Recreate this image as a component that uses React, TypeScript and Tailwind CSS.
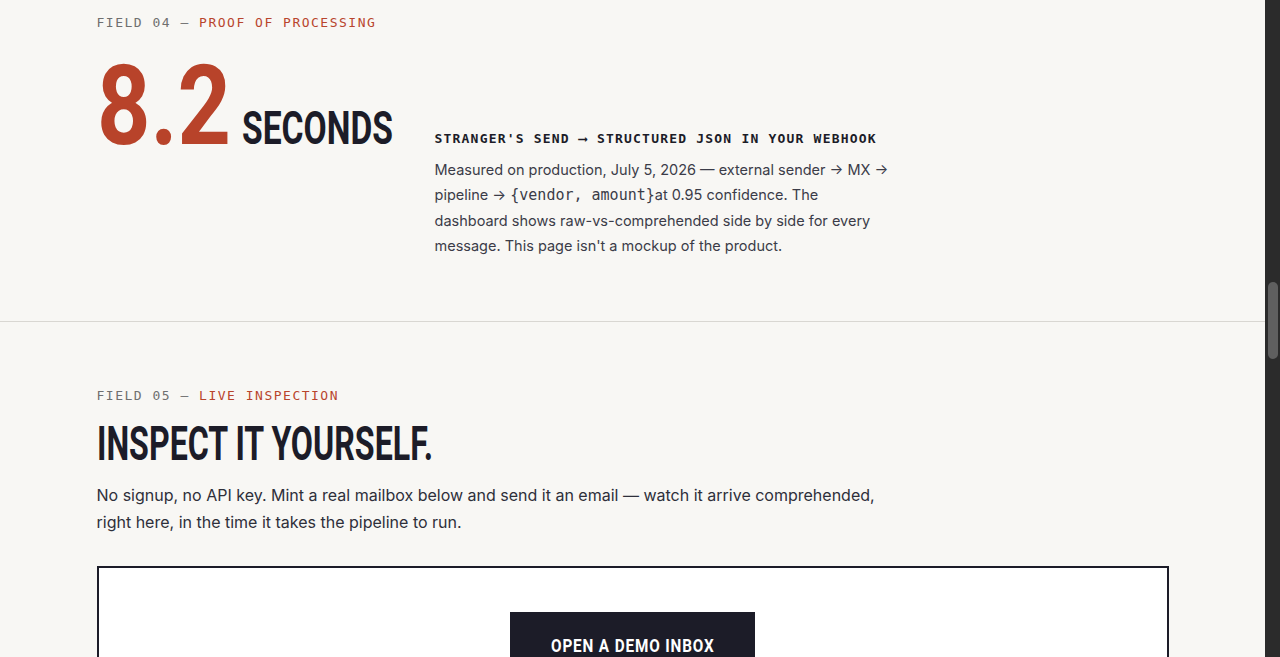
const DISPLAY = "font-['Roboto','Liberation_Sans',sans-serif] font-bold";
const MONO = "font-['DejaVu_Sans_Mono','Liberation_Mono',monospace]";
const BODY = "font-['Inter','Liberation_Sans',sans-serif]";

// No condensed face is installed, so the display type is squeezed horizontally.
// The outer box keeps the width the condensed text would take in the flow.
function Squeeze({ box, scale, children }: { box: string; scale: string; children: string }) {
  return (
    <span className={`inline-block whitespace-nowrap ${box}`}>
      <span className={`inline-block origin-left ${scale}`}>{children}</span>
    </span>
  );
}

function FieldLabel({ num, name }: { num: string; name: string }) {
  return (
    <p className={`${MONO} text-[13px] leading-5 tracking-[1.5px] text-[#6f6f6f]`}>
      FIELD {num} — <span className="text-[#b8452d]">{name}</span>
    </p>
  );
}

function ProofSection() {
  return (
    <section className="border-b border-[#d9d7d2]">
      <div className="mx-auto max-w-[1072px] pt-[13px] pb-[63px]">
        <FieldLabel num="04" name="PROOF OF PROCESSING" />
        <div className="mt-[18px] flex items-start gap-[42px]">
          <div className="flex items-baseline gap-3">
            <span className={`${DISPLAY} text-[111px] leading-none text-[#b8432a]`}>
              <Squeeze box="w-[133px]" scale="scale-x-[0.84]">8.2</Squeeze>
            </span>
            <span className={`${DISPLAY} text-[46px] leading-none text-[#1c1c28]`}>
              <Squeeze box="w-[151px]" scale="scale-x-[0.73]">SECONDS</Squeeze>
            </span>
          </div>
          <div className="max-w-[455px] pt-[78px]">
            <h3 className={`${MONO} text-[13px] font-bold leading-5 tracking-[1.2px] text-[#1c1c28]`}>
              STRANGER'S SEND ⟶ STRUCTURED JSON IN YOUR WEBHOOK
            </h3>
            <p className={`${BODY} mt-2 text-[14.5px] leading-[25px] text-[#3b3c48]`}>
              Measured on production, July 5, 2026 — external sender → MX → pipeline →{" "}
              <code className={`${MONO} text-[15px]`}>{"{vendor, amount}"}</code>at 0.95 confidence. The
              dashboard shows raw-vs-comprehended side by side for every message. This page isn't a mockup
              of the product.
            </p>
          </div>
        </div>
      </div>
    </section>
  );
}

function InspectSection() {
  return (
    <section>
      <div className="mx-auto max-w-[1072px] pt-[64px]">
        <FieldLabel num="05" name="LIVE INSPECTION" />
        <h2 className={`${DISPLAY} mt-[14px] text-[48px] leading-none text-[#1c1c28]`}>
          <Squeeze box="w-[336px]" scale="scale-x-[0.67]">INSPECT IT YOURSELF.</Squeeze>
        </h2>
        <p className={`${BODY} mt-[14px] max-w-[800px] text-[16px] leading-[27px] text-[#2e2f3a]`}>
          No signup, no API key. Mint a real mailbox below and send it an email — watch it arrive
          comprehended, right here, in the time it takes the pipeline to run.
        </p>
        <div className="mt-[30px] border-2 border-[#1c1c28] bg-white px-8 pt-[44px] pb-16">
          <div className="flex justify-center">
            <button
              type="button"
              className={`${DISPLAY} bg-[#1c1c28] px-[41px] pt-[22px] pb-[22px] text-[18px] leading-6 tracking-[1px] text-white`}
            >
              <Squeeze box="w-[163px]" scale="scale-x-[0.85]">OPEN A DEMO INBOX</Squeeze>
            </button>
          </div>
        </div>
      </div>
    </section>
  );
}

export default function App() {
  return (
    <div className="flex h-[657px] overflow-hidden bg-[#f8f7f4]">
      <main className="min-w-0 flex-1">
        <ProofSection />
        <InspectSection />
      </main>
      {/* fake dark scrollbar */}
      <div className="w-[15px] shrink-0 bg-[#2b2b2b] pt-[282px]">
        <div className="mx-auto h-[77px] w-[10px] rounded-full bg-[#5f5f5f]" />
      </div>
    </div>
  );
}
